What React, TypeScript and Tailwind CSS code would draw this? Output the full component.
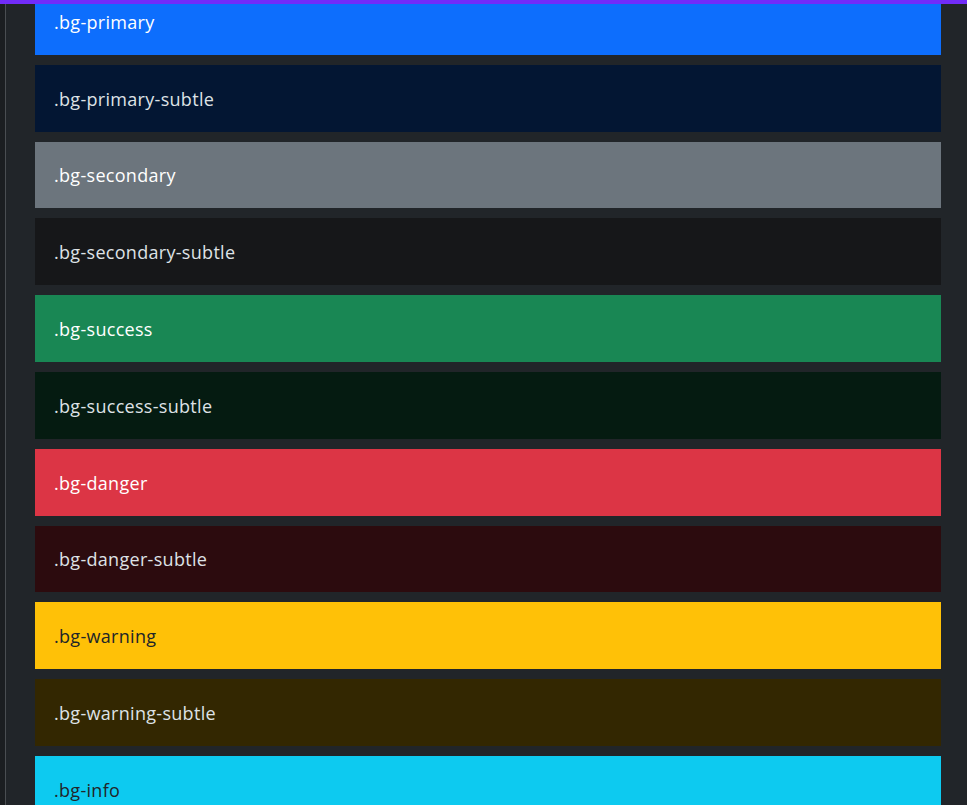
import React from 'react';

const swatches = [
  { name: '.bg-primary', bg: 'bg-[#0d6efd]', text: 'text-white' },
  { name: '.bg-primary-subtle', bg: 'bg-[#031633]', text: 'text-[#dee2e6]' },
  { name: '.bg-secondary', bg: 'bg-[#6c757d]', text: 'text-white' },
  { name: '.bg-secondary-subtle', bg: 'bg-[#161719]', text: 'text-[#dee2e6]' },
  { name: '.bg-success', bg: 'bg-[#198754]', text: 'text-white' },
  { name: '.bg-success-subtle', bg: 'bg-[#051b11]', text: 'text-[#dee2e6]' },
  { name: '.bg-danger', bg: 'bg-[#dc3545]', text: 'text-white' },
  { name: '.bg-danger-subtle', bg: 'bg-[#2c0b0e]', text: 'text-[#dee2e6]' },
  { name: '.bg-warning', bg: 'bg-[#ffc107]', text: 'text-[#212529]' },
  { name: '.bg-warning-subtle', bg: 'bg-[#332701]', text: 'text-[#dee2e6]' },
  { name: '.bg-info', bg: 'bg-[#0dcaf0]', text: 'text-[#212529]' },
];

export default function App() {
  return (
    <div className="relative h-[805px] overflow-hidden bg-[#212529] font-['Open_Sans','Noto_Sans',sans-serif]">
      <div className="flex h-full">
        <div className="w-[5px] shrink-0 bg-[#1b1e21]" />
        <div className="w-px shrink-0 bg-[#4a4e52]" />
        <div className="flex-1 pl-[29px] pr-[26px]">
          <div className="-mt-[12px] flex flex-col gap-[10px]">
            {swatches.map((s) => (
              <div
                key={s.name}
                className={`${s.bg} ${s.text} flex h-[66.8px] shrink-0 items-center px-[19px] pt-[2px] text-[18px] tracking-[0.3px]`}
              >
                {s.name}
              </div>
            ))}
          </div>
        </div>
      </div>
      <div className="absolute left-0 right-0 top-0 h-[4px] bg-[#712cf9]" />
    </div>
  );
}
